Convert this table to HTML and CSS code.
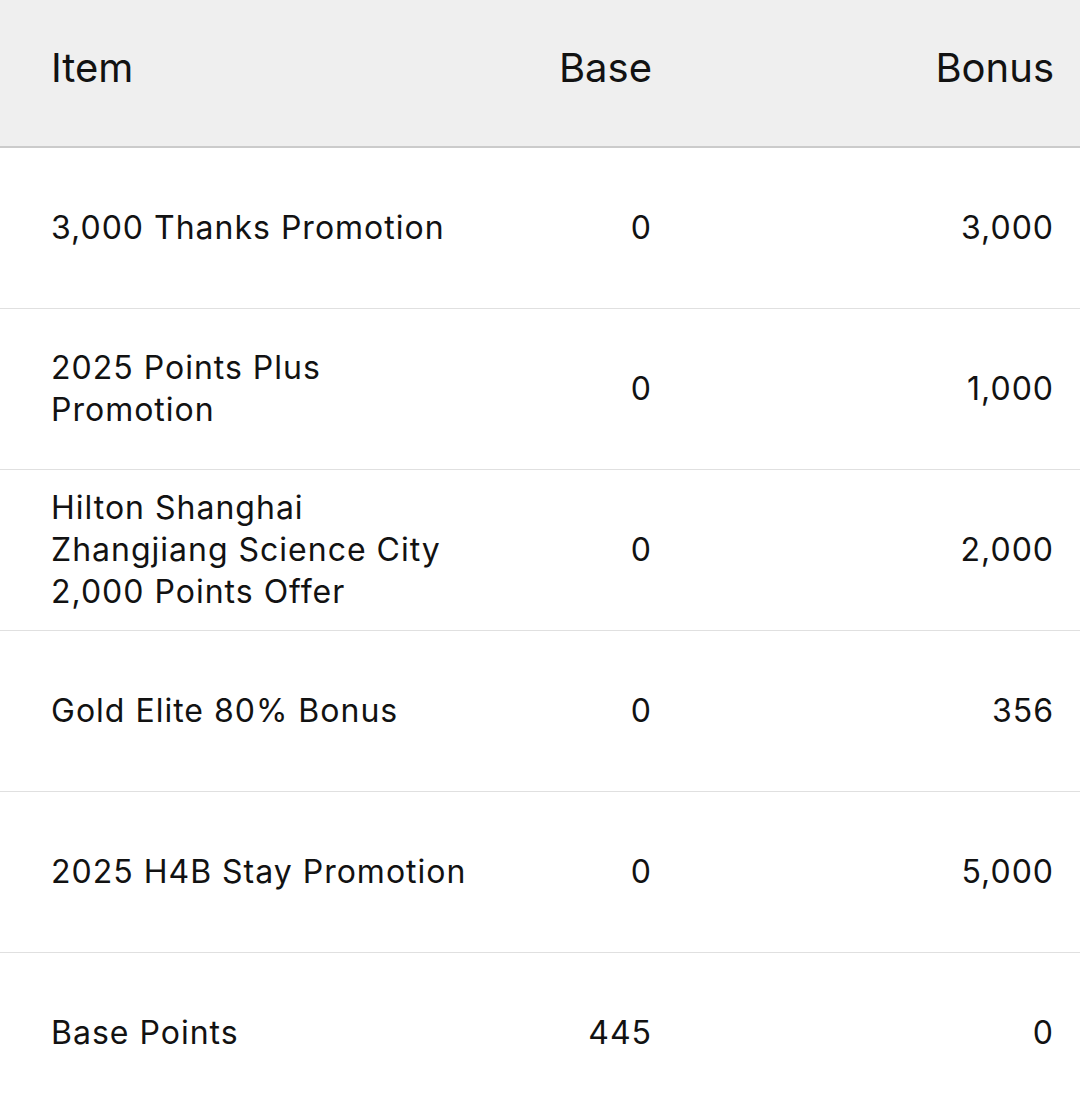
FILE: index.html
```html
<!DOCTYPE html>
<html>
<head>
<meta charset="utf-8">
<link rel="stylesheet" href="styles.css">
</head>
<body>
<div class="table">
  <div class="row head">
    <div class="c item">Item</div>
    <div class="c num">Base</div>
    <div class="c num">Bonus</div>
  </div>
  <div class="row">
    <div class="c item">3,000 Thanks Promotion</div>
    <div class="c num">0</div>
    <div class="c num">3,000</div>
  </div>
  <div class="row">
    <div class="c item">2025 Points Plus Promotion</div>
    <div class="c num">0</div>
    <div class="c num">1,000</div>
  </div>
  <div class="row">
    <div class="c item">Hilton Shanghai Zhangjiang Science City 2,000 Points Offer</div>
    <div class="c num">0</div>
    <div class="c num">2,000</div>
  </div>
  <div class="row">
    <div class="c item">Gold Elite 80% Bonus</div>
    <div class="c num">0</div>
    <div class="c num">356</div>
  </div>
  <div class="row">
    <div class="c item">2025 H4B Stay Promotion</div>
    <div class="c num">0</div>
    <div class="c num">5,000</div>
  </div>
  <div class="row last">
    <div class="c item">Base Points</div>
    <div class="c num">445</div>
    <div class="c num">0</div>
  </div>
</div>
</body>
</html>
```

FILE: styles.css
```css
html, body {
  margin: 0;
  padding: 0;
  background: #ffffff;
}
body {
  font-family: Inter, "Liberation Sans", Arial, sans-serif;
  color: #121212;
  width: 1080px;
  height: 1110px;
  overflow: hidden;
}
.table {
  display: flex;
  flex-direction: column;
}
.row {
  display: grid;
  grid-template-columns: 428px 172px 1fr;
  align-items: center;
  padding: 0 27px 0 51px;
  height: 160px;
  border-bottom: 1px solid #e0e0e0;
  font-size: 32px;
  line-height: 42px;
  letter-spacing: 1px;
}
.row.head {
  height: 136px;
  padding-bottom: 10px;
  background: #efefef;
  border-bottom: 2px solid #cbcbcb;
  font-size: 40px;
  letter-spacing: 0;
}
.row.last {
  border-bottom: none;
}
.c.num {
  text-align: right;
  margin-right: -1px;
}
```
